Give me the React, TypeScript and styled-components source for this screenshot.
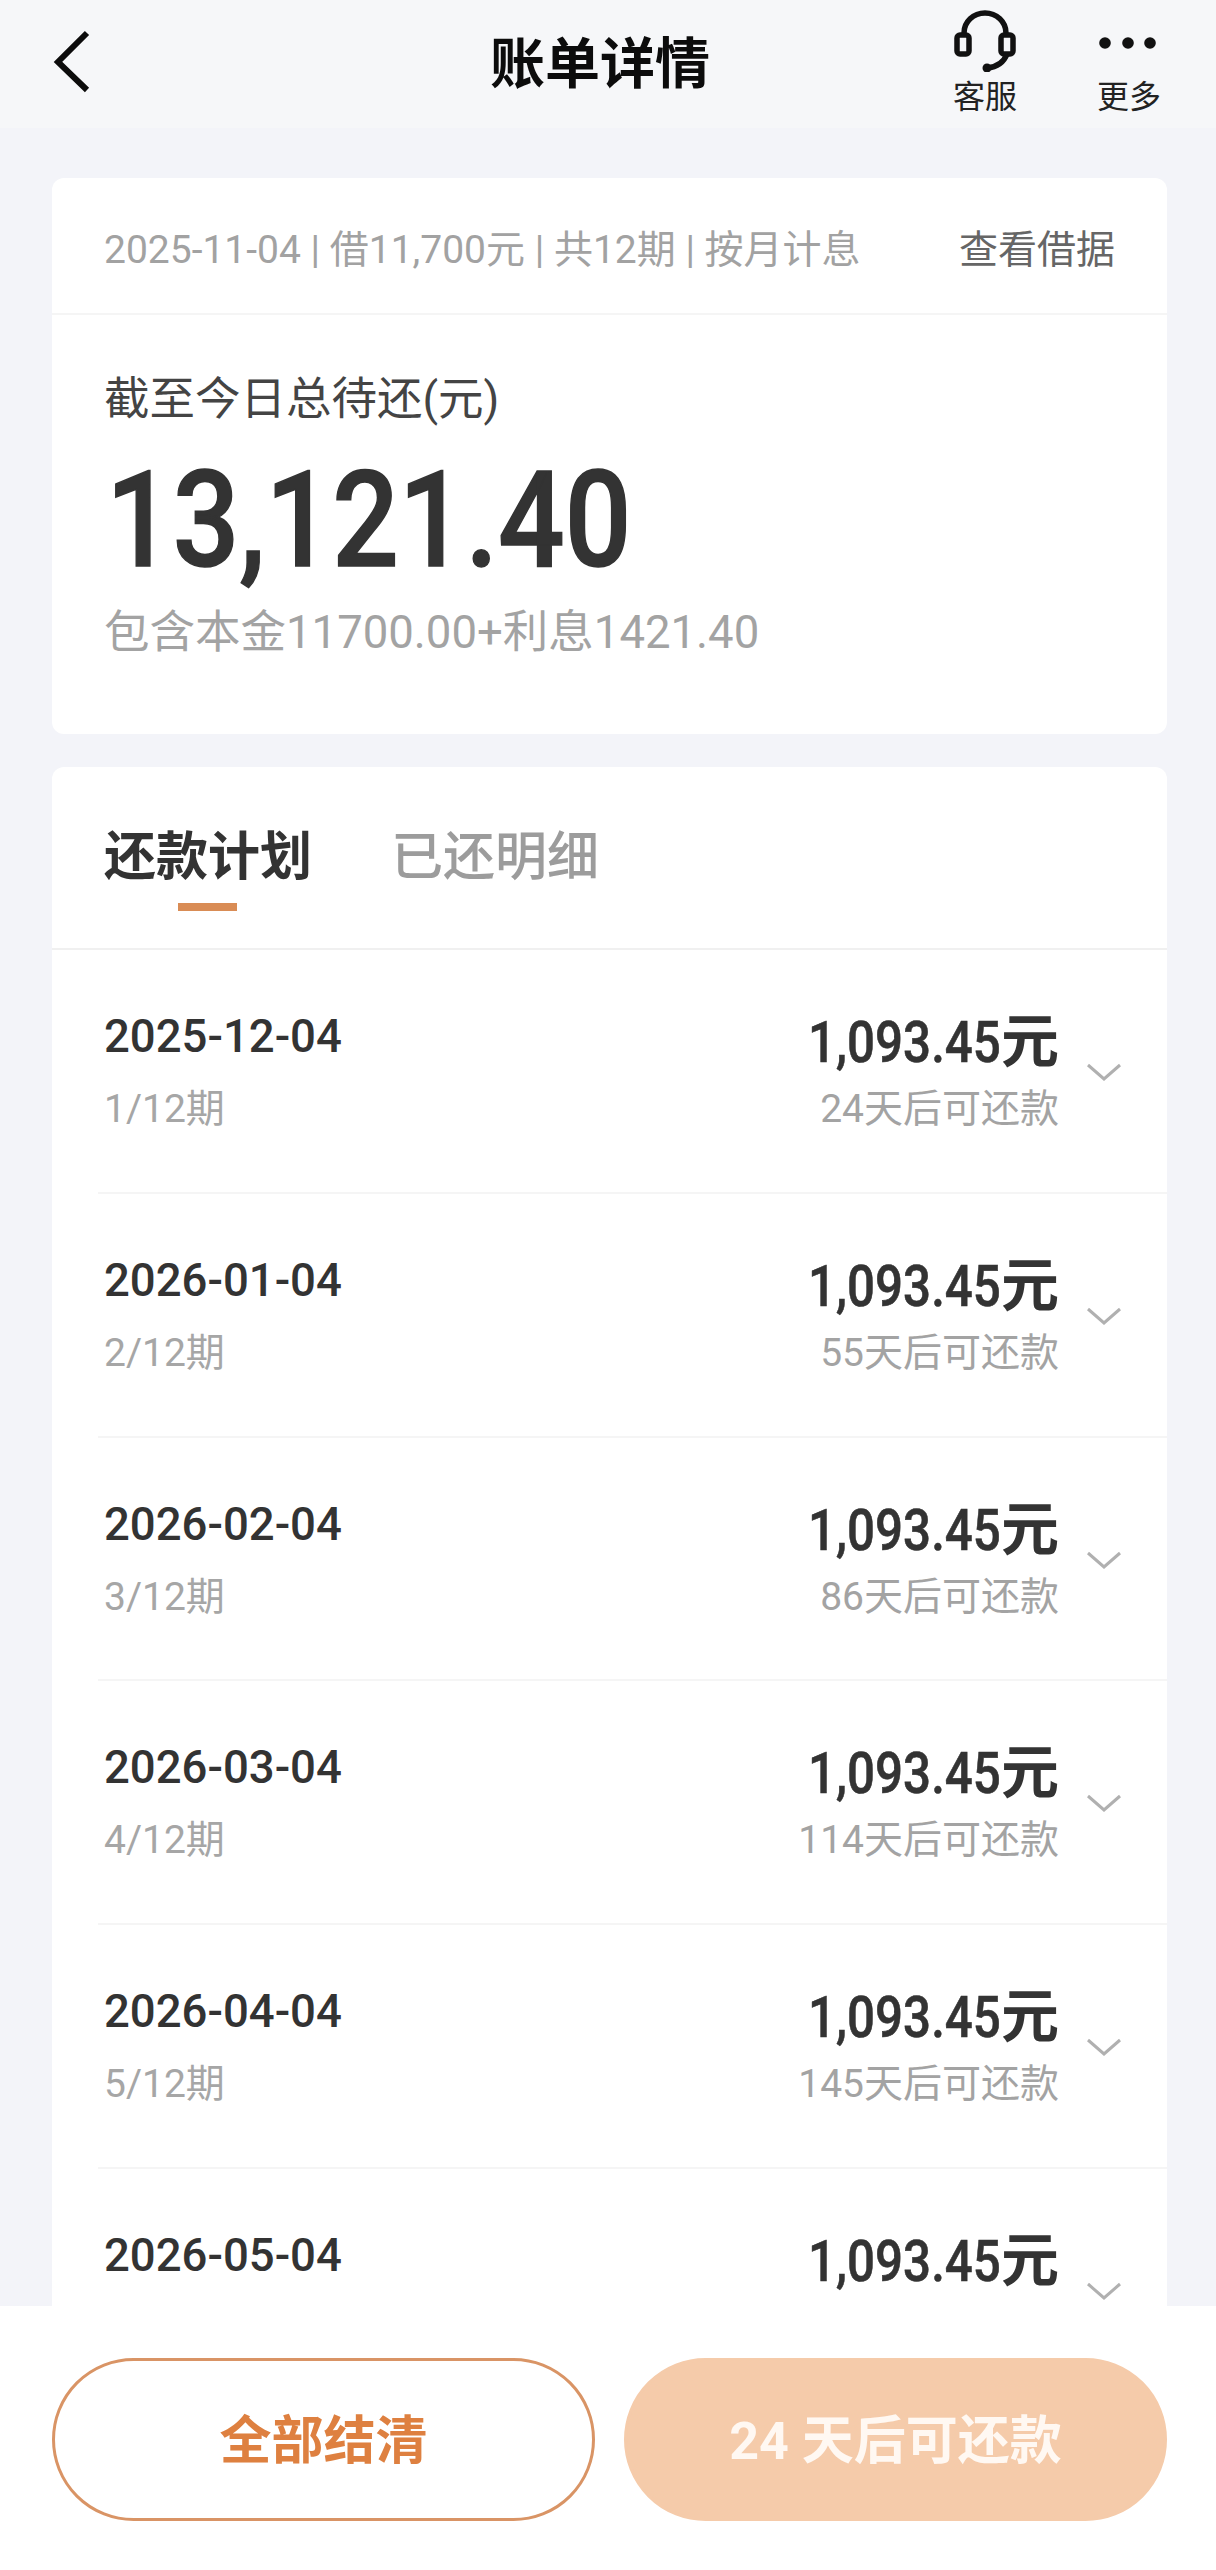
import React from "react";
import styled, { createGlobalStyle } from "styled-components";

const Global = createGlobalStyle`
  html, body { margin: 0; padding: 0; background: #f3f4f9; }
  * { box-sizing: border-box; }
`;
const sans = `Roboto, "Noto Sans CJK SC", sans-serif`;

const Page = styled.div`
  width: 1216px; height: 2570px; display: flex; flex-direction: column; overflow: hidden;
  font-family: ${sans}; background: #f3f4f9; color: #333;
`;
const Header = styled.header`
  height: 128px; flex: none; display: flex; align-items: flex-start; background: #f6f7f9; padding: 0 55px 0 52px; position: relative;
`;
const Back = styled.svg`width: 40px; height: 64px; margin-top: 30px; flex: none;`;
const Title = styled.h1`
  margin: 31px 0 0 398px; width: 217px; font-size: 55px; line-height: 66px; font-weight: 700; color: #0c0c0c; white-space: nowrap; flex: none;
`;
const Actions = styled.div`margin-left: auto; display: flex; gap: 80px; padding-top: 10px;`;
const Action = styled.div`display: flex; flex-direction: column; align-items: center; width: 64px;`;
const ActionIcon = styled.svg`width: 62px; height: 62px; display: block;`;
const ActionLabel = styled.span`font-size: 32px; line-height: 46px; margin-top: 2px; color: #222; white-space: nowrap;`;

const Content = styled.main`flex: 1; min-height: 0; overflow: hidden; padding: 50px 49px 0 52px; display: flex; flex-direction: column; gap: 33px;`;
const Card = styled.section`background: #fff; border-radius: 12px; flex: none;`;
const MetaRow = styled.div`
  height: 137px; display: flex; align-items: center; justify-content: space-between; padding: 0 52px; border-bottom: 2px solid #f5f5f5;
`;
const Meta = styled.span`font-size: 39px; color: #a2a2a2; white-space: nowrap;`;
const MetaLink = styled.span`font-size: 39px; color: #666; white-space: nowrap;`;
const Summary = styled.div`padding: 57px 52px 0; height: 419px;`;
const SummaryLabel = styled.div`font-size: 45.5px; line-height: 56px; color: #444;`;
const Total = styled.div`
  font-size: 134px; line-height: 140px; font-weight: 500; -webkit-text-stroke: 1.5px #333; color: #333; margin: 23px 0 0 2px; white-space: nowrap;
  transform: scaleX(0.875); transform-origin: left center;
`;
const SummaryNote = styled.div`font-size: 45.5px; line-height: 56px; color: #a3a3a3; margin-top: 14px; white-space: nowrap;`;

const Tabs = styled.div`height: 183px; display: flex; gap: 79px; padding: 60px 52px 0; border-bottom: 2px solid #f0f0f0;`;
const Tab = styled.div<{ $active?: boolean }>`
  position: relative; font-size: 52px; line-height: 62px; height: 62px; white-space: nowrap;
  font-weight: ${(p) => (p.$active ? 700 : 500)}; color: ${(p) => (p.$active ? "#333" : "#9c9c9c")};
`;
const TabBar = styled.i`position: absolute; left: 74px; top: 76px; width: 59px; height: 8px; background: #d98c55;`;

const Row = styled.div`
  height: 243.8px; margin-left: 46px; padding: 0 0 0 6px; display: flex; align-items: flex-start; border-bottom: 2px solid #f5f5f5;
`;
const RowLeft = styled.div`padding-top: 59px; flex: 1;`;
const RowDate = styled.div`font-size: 45.5px; line-height: 56px; font-weight: 500; color: #333; white-space: nowrap;`;
const RowPeriod = styled.div`font-size: 39px; line-height: 50px; color: #a6a6a6; margin-top: 19px;`;
const RowRight = styled.div`padding-top: 59px; display: flex; flex-direction: column; align-items: flex-end;`;
const Amount = styled.div`font-size: 58px; line-height: 66px; font-weight: 700; color: #333; white-space: nowrap;`;
const Digits = styled.span`
  display: inline-block; font-weight: 500; -webkit-text-stroke: 0.6px #333; transform: scaleX(0.85); transform-origin: right center; margin-left: -36px;
`;
const Due = styled.div`font-size: 39px; line-height: 50px; color: #a3a3a3; margin-top: 9px; white-space: nowrap;`;
const Chevron = styled.svg`width: 36px; height: 22px; margin: 112px 45px 0 27px; flex: none;`;

const Footer = styled.footer`
  flex: none; height: 264px; background: #fff; padding: 52px 49px 0 52px; display: flex; gap: 29px; align-items: flex-start;
`;
const Button = styled.div<{ $primary?: boolean }>`
  flex: 1; height: 163px; border-radius: 82px; display: flex; align-items: center; justify-content: center; padding-bottom: 6px;
  font-size: 52px; font-weight: 700; white-space: nowrap;
  border: 3px solid ${(p) => (p.$primary ? "#f5cbaa" : "#d99465")};
  background: ${(p) => (p.$primary ? "#f5cbaa" : "#fff")};
  color: ${(p) => (p.$primary ? "#fff8f2" : "#de8040")};
`;

const rows = [
  { date: "2025-12-04", period: "1/12期", due: "24天后可还款" },
  { date: "2026-01-04", period: "2/12期", due: "55天后可还款" },
  { date: "2026-02-04", period: "3/12期", due: "86天后可还款" },
  { date: "2026-03-04", period: "4/12期", due: "114天后可还款" },
  { date: "2026-04-04", period: "5/12期", due: "145天后可还款" },
  { date: "2026-05-04" },
];

export default function App() {
  return (
    <Page>
      <Global />
      <Header>
        <Back viewBox="0 0 40 64" fill="none">
          <path d="M35 3 L6 32 L35 60" stroke="#0c0c0c" strokeWidth="6" />
        </Back>
        <Title>账单详情</Title>
        <Actions>
          <Action>
            <ActionIcon viewBox="0 0 62 62" fill="none" stroke="#111">
              <path d="M10 26 V23 a21 20 0 0 1 42 0 V26" strokeWidth="5.5" />
              <rect x="3" y="25" width="12" height="19" rx="3" strokeWidth="5.5" />
              <rect x="47" y="25" width="12" height="19" rx="3" strokeWidth="5.5" />
              <path d="M53 44 C50 52 43 57 33 58" strokeWidth="5.5" />
              <circle cx="33" cy="58" r="4.5" fill="#111" stroke="none" />
            </ActionIcon>
            <ActionLabel>客服</ActionLabel>
          </Action>
          <Action>
            <ActionIcon viewBox="0 0 62 62" fill="#111">
              <circle cx="7" cy="33" r="5.8" />
              <circle cx="30" cy="33" r="5.8" />
              <circle cx="52" cy="33" r="5.8" />
            </ActionIcon>
            <ActionLabel>更多</ActionLabel>
          </Action>
        </Actions>
      </Header>
      <Content>
        <Card>
          <MetaRow>
            <Meta>2025-11-04 | 借11,700元 | 共12期 | 按月计息</Meta>
            <MetaLink>查看借据</MetaLink>
          </MetaRow>
          <Summary>
            <SummaryLabel>截至今日总待还(元)</SummaryLabel>
            <Total>13,121.40</Total>
            <SummaryNote>包含本金11700.00+利息1421.40</SummaryNote>
          </Summary>
        </Card>
        <Card>
          <Tabs>
            <Tab $active>
              还款计划
              <TabBar />
            </Tab>
            <Tab>已还明细</Tab>
          </Tabs>
          {rows.map(({ date, period, due }) => (
            <Row key={date}>
              <RowLeft>
                <RowDate>{date}</RowDate>
                {period && <RowPeriod>{period}</RowPeriod>}
              </RowLeft>
              <RowRight>
                <Amount>
                  <Digits>1,093.45</Digits>元
                </Amount>
                {due && <Due>{due}</Due>}
              </RowRight>
              <Chevron viewBox="0 0 36 22" fill="none">
                <path d="M2 3 L18 17 L34 3" stroke="#b0b0b0" strokeWidth="3" />
              </Chevron>
            </Row>
          ))}
        </Card>
      </Content>
      <Footer>
        <Button>全部结清</Button>
        <Button $primary>24 天后可还款</Button>
      </Footer>
    </Page>
  );
}
